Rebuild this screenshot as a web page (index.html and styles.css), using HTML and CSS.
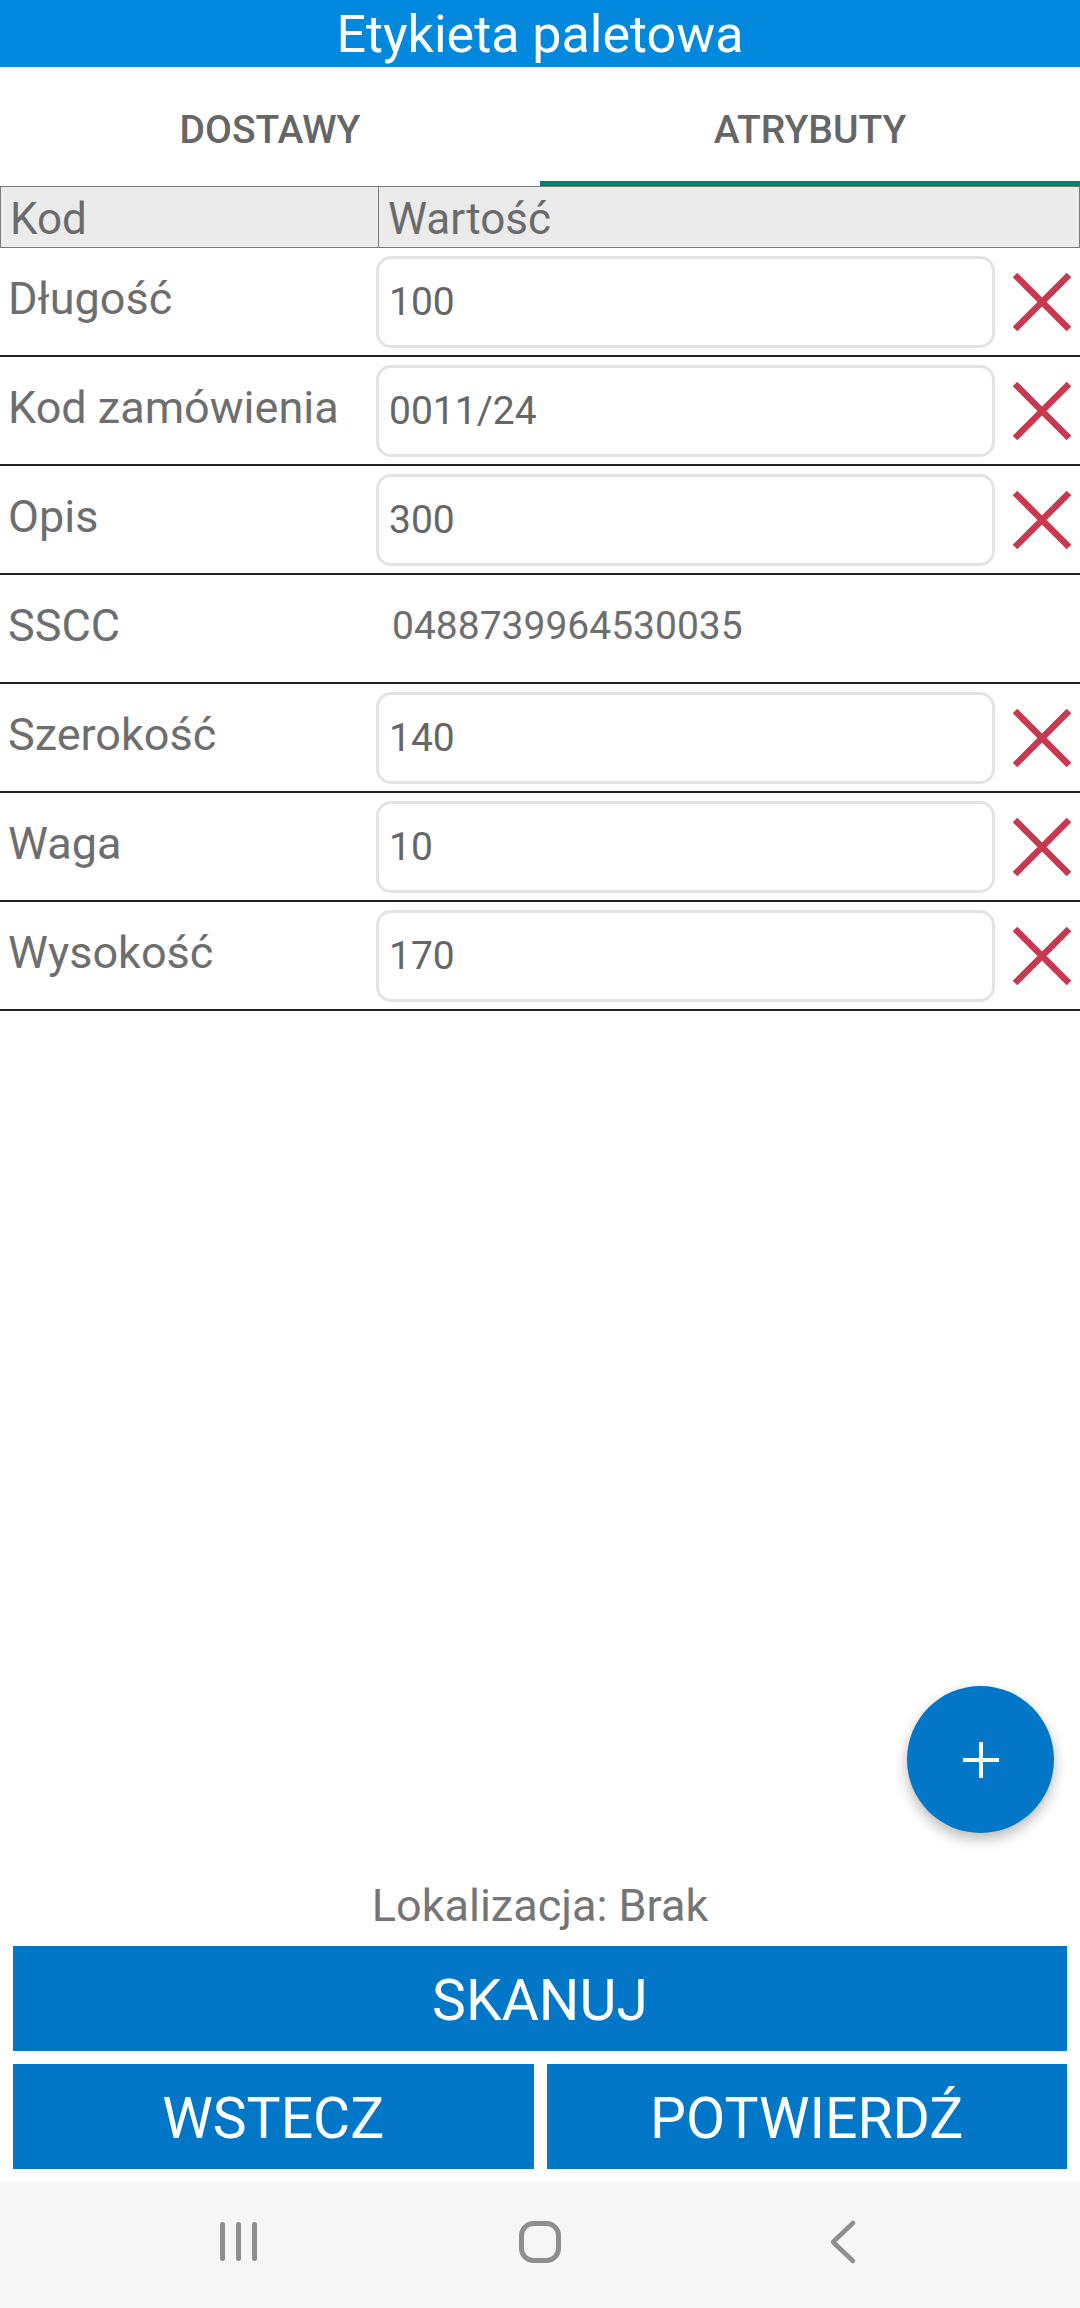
FILE: index.html
```html
<!DOCTYPE html>
<html lang="pl">
<head>
    <meta charset="UTF-8">
    <meta name="viewport" content="width=device-width, initial-scale=1.0">
    <title>Etykieta paletowa</title>
    <link rel="stylesheet" href="styles.css">
</head>
<body>
    <div class="app">
        <header class="title-bar">Etykieta paletowa</header>

        <nav class="tabs">
            <div class="tab">DOSTAWY</div>
            <div class="tab active">ATRYBUTY</div>
        </nav>

        <div class="table-head">
            <div class="head-cell">Kod</div>
            <div class="head-cell">Wartość</div>
        </div>

        <div class="attr-list">
            <div class="attr-row">
                <div class="attr-name">Długość</div>
                <input class="attr-input" type="text" value="100">
                <button class="remove" type="button" aria-label="Usuń">
                    <svg viewBox="0 0 60 60"><path d="M3 3 L57 57 M57 3 L3 57"/></svg>
                </button>
            </div>
            <div class="attr-row">
                <div class="attr-name">Kod zamówienia</div>
                <input class="attr-input" type="text" value="0011/24">
                <button class="remove" type="button" aria-label="Usuń">
                    <svg viewBox="0 0 60 60"><path d="M3 3 L57 57 M57 3 L3 57"/></svg>
                </button>
            </div>
            <div class="attr-row">
                <div class="attr-name">Opis</div>
                <input class="attr-input" type="text" value="300">
                <button class="remove" type="button" aria-label="Usuń">
                    <svg viewBox="0 0 60 60"><path d="M3 3 L57 57 M57 3 L3 57"/></svg>
                </button>
            </div>
            <div class="attr-row">
                <div class="attr-name">SSCC</div>
                <div class="attr-value">0488739964530035</div>
            </div>
            <div class="attr-row">
                <div class="attr-name">Szerokość</div>
                <input class="attr-input" type="text" value="140">
                <button class="remove" type="button" aria-label="Usuń">
                    <svg viewBox="0 0 60 60"><path d="M3 3 L57 57 M57 3 L3 57"/></svg>
                </button>
            </div>
            <div class="attr-row">
                <div class="attr-name">Waga</div>
                <input class="attr-input" type="text" value="10">
                <button class="remove" type="button" aria-label="Usuń">
                    <svg viewBox="0 0 60 60"><path d="M3 3 L57 57 M57 3 L3 57"/></svg>
                </button>
            </div>
            <div class="attr-row">
                <div class="attr-name">Wysokość</div>
                <input class="attr-input" type="text" value="170">
                <button class="remove" type="button" aria-label="Usuń">
                    <svg viewBox="0 0 60 60"><path d="M3 3 L57 57 M57 3 L3 57"/></svg>
                </button>
            </div>
        </div>

        <div class="spacer">
            <button class="fab" type="button" aria-label="Dodaj">
                <svg viewBox="0 0 40 40"><path d="M20 1 V39 M1 20 H39"/></svg>
            </button>
        </div>

        <footer class="actions">
            <div class="location">Lokalizacja: Brak</div>
            <button class="action-btn" type="button">SKANUJ</button>
            <div class="action-pair">
                <button class="action-btn" type="button">WSTECZ</button>
                <button class="action-btn" type="button">POTWIERDŹ</button>
            </div>
        </footer>

        <div class="system-nav">
            <span class="nav-icon">
                <svg viewBox="0 0 60 60"><path d="M14.5 12.5 V46.5 M30.5 12.5 V46.5 M46.5 12.5 V46.5"/></svg>
            </span>
            <span class="nav-icon">
                <svg viewBox="0 0 60 60"><rect x="11.5" y="11.5" width="37" height="37" rx="12"/></svg>
            </span>
            <span class="nav-icon">
                <svg viewBox="0 0 60 60"><path d="M41 11 L21 30 L41 49"/></svg>
            </span>
        </div>
    </div>
</body>
</html>
```

FILE: styles.css
```css
html, body {
    margin: 0;
    padding: 0;
}
body {
    font-family: Roboto, "Liberation Sans", sans-serif;
    background-color: #ffffff;
    color: #6e6e6e;
}
.app {
    width: 1080px;
    height: 100vh;
    display: flex;
    flex-direction: column;
}
.title-bar {
    height: 67px;
    line-height: 69px;
    background-color: #0289dd;
    color: #ffffff;
    font-size: 52px;
    text-align: center;
    overflow: hidden;
}
.tabs {
    display: flex;
}
.tab {
    flex: 1;
    height: 102px;
    line-height: 102px;
    padding-top: 12px;
    border-bottom: 5px solid transparent;
    text-align: center;
    font-size: 39px;
    font-weight: 500;
    color: #666666;
}
.tab.active {
    border-bottom-color: #00806f;
}
.table-head {
    display: grid;
    grid-template-columns: 378px 1fr;
    background-color: #ebebeb;
    border: 1px solid #7a7a7a;
}
.head-cell {
    height: 56px;
    line-height: 56px;
    padding: 4px 0 0 9px;
    font-size: 44px;
    color: #6b6b6b;
}
.head-cell:first-child {
    border-right: 1px solid #7a7a7a;
}
.attr-row {
    display: grid;
    grid-template-columns: 376px 619px 1fr;
    align-items: center;
    height: 107px;
    border-bottom: 2px solid #222222;
}
.attr-name {
    padding: 0 0 6px 8px;
    font-size: 45px;
    color: #6e6e6e;
    white-space: nowrap;
}
.attr-input {
    box-sizing: border-box;
    width: 619px;
    height: 92px;
    margin: 0;
    padding: 0 10px;
    border: 3px solid #e3e3e3;
    border-radius: 15px;
    background: #ffffff;
    font-family: inherit;
    font-size: 39px;
    color: #666666;
    outline: none;
}
.attr-value {
    padding: 0 0 6px 16px;
    font-size: 39px;
    color: #6e6e6e;
}
.remove {
    width: 60px;
    height: 60px;
    margin-left: 17px;
    padding: 0;
    border: none;
    background: none;
}
.remove svg {
    display: block;
    width: 60px;
    height: 60px;
    stroke: #c8384f;
    stroke-width: 6.5;
    fill: none;
}
.spacer {
    flex: 1;
    position: relative;
}
.fab {
    position: absolute;
    right: 26px;
    bottom: 43px;
    width: 147px;
    height: 147px;
    border: none;
    border-radius: 50%;
    background-color: #0277c8;
    box-shadow: 0 6px 14px rgba(0, 0, 0, 0.28);
    display: flex;
    align-items: center;
    justify-content: center;
    padding: 0;
}
.fab svg {
    width: 38px;
    height: 38px;
    stroke: #ffffff;
    stroke-width: 4.2;
    fill: none;
}
.actions {
    display: flex;
    flex-direction: column;
    gap: 13px;
    padding: 0 13px 13px;
}
.location {
    height: 60px;
    line-height: 60px;
    margin-bottom: -3px;
    text-align: center;
    font-size: 45px;
    color: #757575;
}
.action-pair {
    display: flex;
    gap: 13px;
}
.action-pair .action-btn {
    flex: 1;
}
.action-btn {
    height: 105px;
    padding: 4px 0 0;
    border: none;
    border-radius: 0;
    background-color: #0277c8;
    color: #ffffff;
    font-family: inherit;
    font-size: 57px;
    cursor: pointer;
}
.system-nav {
    height: 120px;
    padding-bottom: 6px;
    background-color: #f6f6f6;
    display: flex;
    align-items: center;
    justify-content: center;
    gap: 242px;
}
.nav-icon svg {
    display: block;
    width: 60px;
    height: 60px;
    stroke: #8e8e8e;
    stroke-width: 5;
    stroke-linecap: round;
    stroke-linejoin: round;
    fill: none;
}
.nav-icon:last-child svg {
    stroke-width: 4.5;
}
```
